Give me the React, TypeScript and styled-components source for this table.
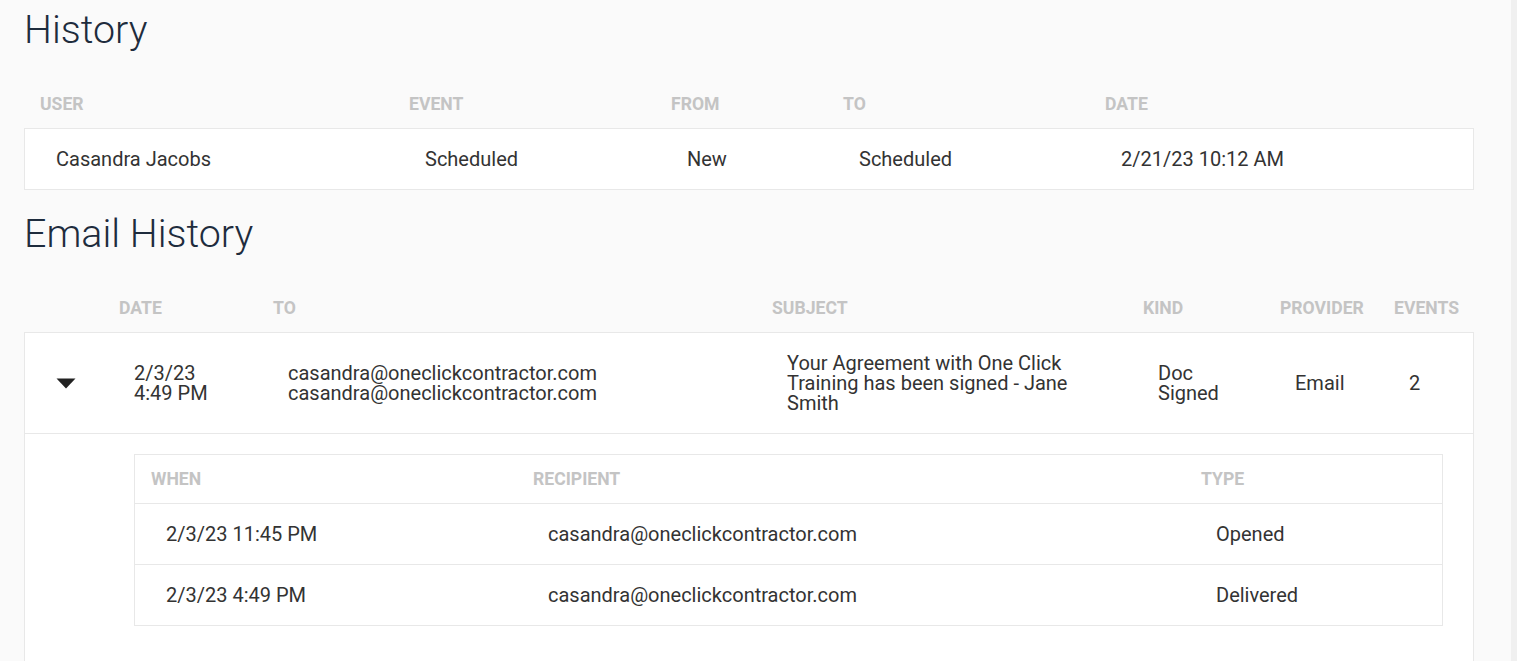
import React from "react";
import styled, { createGlobalStyle } from "styled-components";

const Global = createGlobalStyle`
  html, body { margin: 0; padding: 0; background: #fafafa; }
  body { font-family: Roboto, "Noto Sans", Arial, sans-serif; color: #333; }
  * { box-sizing: border-box; }
`;

const Page = styled.div`
  display: flex;
  min-height: 100vh;
`;

const Main = styled.main`
  flex: 1;
  padding: 0 37px 0 24px;
`;

const ScrollTrack = styled.div`
  width: 6px;
  background: #f0f0f0;
`;

const Title = styled.h1<{ $top?: number }>`
  margin: ${(p) => p.$top ?? 0}px 0 20px 0;
  font-size: 39.4px;
  font-weight: 300;
  line-height: 60px;
  color: #1e2c3d;
`;

const HeaderRow = styled.div<{ $cols: string }>`
  display: grid;
  grid-template-columns: ${(p) => p.$cols};
  height: 48px;
  align-items: center;
`;

const HeadCell = styled.div`
  padding-left: 16px;
  font-size: 17.6px;
  font-weight: 700;
  color: #c4c4c4;
  text-transform: uppercase;
  white-space: nowrap;
`;

const Card = styled.div`
  background: #fff;
  border: 1px solid #e8e8e8;
`;

const Row = styled.div<{ $cols: string; $divider?: boolean }>`
  display: grid;
  grid-template-columns: ${(p) => p.$cols};
  align-items: center;
  min-height: ${(p) => (p.$divider ? 61 : 60)}px;
  border-top: ${(p) => (p.$divider ? "1px solid #e8e8e8" : "none")};
`;

const Cell = styled.div<{ $pad?: number }>`
  padding-left: ${(p) => p.$pad ?? 31}px;
  font-size: 20px;
  line-height: 20px;
  color: #333;
`;

const EmailRow = styled.div`
  display: grid;
  grid-template-columns: 79px 154px 499px 371px 137px 114px 1fr;
  align-items: center;
  padding: 20px 0;
  border-bottom: 1px solid #e8e8e8;
`;

const CaretCell = styled.div`
  display: flex;
  justify-content: center;
  padding-left: 2px;
`;

const SubjectCell = styled(Cell)`
  padding-right: 30px;
`;

const Expanded = styled.div`
  padding: 20px 30px 40px 109px;
`;

const InnerTable = styled.div`
  border: 1px solid #e8e8e8;
`;

const HIST_COLS = "369px 262px 172px 262px 1fr";
const EMAIL_COLS = "79px 154px 499px 371px 137px 114px 1fr";
const INNER_COLS = "382px 668px 1fr";

const Caret = () => (
  <svg width="20" height="11" viewBox="0 0 20 11">
    <path d="M0.5 0.5 H19.5 L10 10.5 Z" fill="#222" />
  </svg>
);

const events = [
  { when: "2/3/23 11:45 PM", recipient: "casandra@oneclickcontractor.com", type: "Opened" },
  { when: "2/3/23 4:49 PM", recipient: "casandra@oneclickcontractor.com", type: "Delivered" },
];

export default function App() {
  return (
    <Page>
      <Global />
      <Main>
        <Title>History</Title>
        <HeaderRow $cols={HIST_COLS}>
          <HeadCell>User</HeadCell>
          <HeadCell>Event</HeadCell>
          <HeadCell>From</HeadCell>
          <HeadCell>To</HeadCell>
          <HeadCell>Date</HeadCell>
        </HeaderRow>
        <Card>
          <Row $cols={HIST_COLS}>
            <Cell>Casandra Jacobs</Cell>
            <Cell>Scheduled</Cell>
            <Cell>New</Cell>
            <Cell>Scheduled</Cell>
            <Cell>2/21/23 10:12 AM</Cell>
          </Row>
        </Card>

        <Title $top={14}>Email History</Title>
        <HeaderRow $cols={EMAIL_COLS}>
          <div />
          <HeadCell>Date</HeadCell>
          <HeadCell>To</HeadCell>
          <HeadCell>Subject</HeadCell>
          <HeadCell>Kind</HeadCell>
          <HeadCell>Provider</HeadCell>
          <HeadCell>Events</HeadCell>
        </HeaderRow>
        <Card>
          <EmailRow>
            <CaretCell>
              <Caret />
            </CaretCell>
            <Cell $pad={30}>
              2/3/23
              <br />
              4:49 PM
            </Cell>
            <Cell $pad={30}>
              casandra@oneclickcontractor.com
              <br />
              casandra@oneclickcontractor.com
            </Cell>
            <SubjectCell $pad={30}>
              Your Agreement with One Click Training has been signed - Jane Smith
            </SubjectCell>
            <Cell $pad={30}>
              Doc
              <br />
              Signed
            </Cell>
            <Cell $pad={30}>Email</Cell>
            <Cell $pad={30}>2</Cell>
          </EmailRow>
          <Expanded>
            <InnerTable>
              <HeaderRow $cols={INNER_COLS}>
                <HeadCell>When</HeadCell>
                <HeadCell>Recipient</HeadCell>
                <HeadCell>Type</HeadCell>
              </HeaderRow>
              {events.map((e) => (
                <Row key={e.when} $cols={INNER_COLS} $divider>
                  <Cell>{e.when}</Cell>
                  <Cell>{e.recipient}</Cell>
                  <Cell>{e.type}</Cell>
                </Row>
              ))}
            </InnerTable>
          </Expanded>
        </Card>
      </Main>
      <ScrollTrack />
    </Page>
  );
}
